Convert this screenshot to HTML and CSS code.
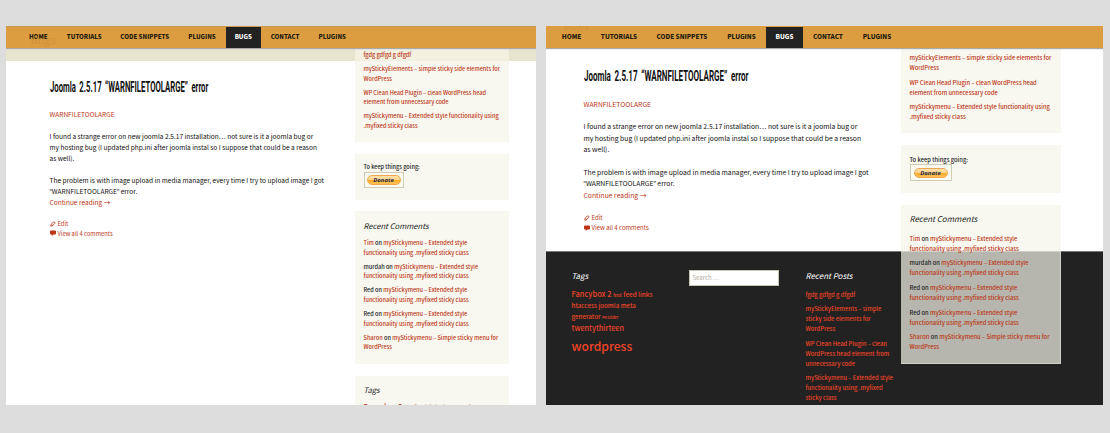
FILE: index.html
```
<!DOCTYPE html>
<html lang="en">
<head>
<meta charset="utf-8">
<title>Sticky menu</title>
<link rel="stylesheet" href="styles.css">
</head>
<body>
<svg class="defs" width="0" height="0">
  <symbol id="pencil" viewBox="0 0 12 12"><path d="M1.5 10.5l.8-4L7 1.7c1-1 3.800 1.500 2.800 2.700L5.400 9.400zM3 6.600l2.600 2.500" fill="none" stroke="currentColor" stroke-width="1.600"/></symbol>
  <symbol id="bubble" viewBox="0 0 12 12"><path d="M2 1h8q2 0 2 2v4q0 2-2 2H7l-3.500 3V9H2Q0 9 0 7V3q0-2 2-2z" fill="currentColor"/></symbol>
</svg>
<main class="stage">
  <section class="shot shot-a">
    <nav class="nav"><span class="ghost">Bugs</span>
      <a>HOME</a><a>TUTORIALS</a><a>CODE SNIPPETS</a><a>PLUGINS</a><a class="active">BUGS</a><a>CONTACT</a><a>PLUGINS</a>
    </nav>
    <div class="band"></div>
    <article class="post">
      <h1><span>Joomla 2.5.17 “WARNFILETOOLARGE” error</span></h1>
      <p class="cat">WARNFILETOOLARGE</p>
      <p>I found a strange error on new joomla 2.5.17 installation… not sure is it a joomla bug or<br>my hosting bug (I updated php.ini after joomla instal so I suppose that could be a reason<br>as well).</p>
      <p>The problem is with image upload in media manager, every time I try to upload image I got<br><span class="q">“</span>WARNFILETOOLARGE<span class="q">”</span> error.<br><a class="more">Continue reading →</a></p>
      <div class="meta"><a><svg><use href="#pencil"/></svg>Edit</a><a><svg><use href="#bubble"/></svg>View all 4 comments</a></div>
    </article>
    <aside class="side">
      <div class="box posts">
        <p><a>fgdg gdfgd g dfgdf</a></p>
        <p><a>myStickyElements – simple sticky side elements for<br>WordPress</a></p>
        <p><a>WP Clean Head Plugin – clean WordPress head<br>element from unnecessary code</a></p>
        <p><a>myStickymenu – Extended style functionality using<br>.myfixed sticky class</a></p>
      </div>
      <div class="box donate"><p>To keep things going:</p><div class="frame"><span class="pill">Donate</span></div></div>
      <div class="box comments">
        <h2>Recent Comments</h2>
        <p><a>Tim</a> on <a>myStickymenu – Extended style<br>functionality using .myfixed sticky class</a></p>
        <p>murdah on <a>myStickymenu – Extended style<br>functionality using .myfixed sticky class</a></p>
        <p>Red on <a>myStickymenu – Extended style<br>functionality using .myfixed sticky class</a></p>
        <p>Red on <a>myStickymenu – Extended style<br>functionality using .myfixed sticky class</a></p>
        <p><a>Sharon</a> on <a>myStickymenu – Simple sticky menu for<br>WordPress</a></p>
      </div>
      <div class="box tagbox"><h2>Tags</h2><p><a>Fancybox 2 <small>feed</small> <span>feed links htaccess joomla</span></a></p></div>
    </aside>
  </section>

  <section class="shot shot-b">
    <nav class="nav"><span class="ghost">Bugs</span>
      <a>HOME</a><a>TUTORIALS</a><a>CODE SNIPPETS</a><a>PLUGINS</a><a class="active">BUGS</a><a>CONTACT</a><a>PLUGINS</a>
    </nav>
    <article class="post">
      <h1><span>Joomla 2.5.17 “WARNFILETOOLARGE” error</span></h1>
      <p class="cat">WARNFILETOOLARGE</p>
      <p>I found a strange error on new joomla 2.5.17 installation… not sure is it a joomla bug or<br>my hosting bug (I updated php.ini after joomla instal so I suppose that could be a reason<br>as well).</p>
      <p>The problem is with image upload in media manager, every time I try to upload image I got<br><span class="q">“</span>WARNFILETOOLARGE<span class="q">”</span> error.<br><a class="more">Continue reading →</a></p>
      <div class="meta"><a><svg><use href="#pencil"/></svg>Edit</a><a><svg><use href="#bubble"/></svg>View all 4 comments</a></div>
    </article>
    <footer class="footer">
      <div class="tags"><h2>Tags</h2>
        <p class="t1">Fancybox 2 <small>feed</small> <span>feed links</span></p>
        <p class="t2">htaccess joomla meta</p>
        <p class="t3">generator <small>PKSlider</small></p>
        <p class="t4">twentythirteen</p>
        <p class="t5">wordpress</p>
      </div>
      <div class="search">Search …</div>
      <div class="recent"><h2>Recent Posts</h2>
        <p>fgdg gdfgd g dfgdf</p>
        <p>myStickyElements – simple<br>sticky side elements for<br>WordPress</p>
        <p>WP Clean Head Plugin – clean<br>WordPress head element from<br>unnecessary code</p>
        <p>myStickymenu – Extended style<br>functionality using .myfixed<br>sticky class</p>
      </div>
    </footer>
    <aside class="side">
      <div class="box posts">
        <p><a>myStickyElements – simple sticky side elements for<br>WordPress</a></p>
        <p><a>WP Clean Head Plugin – clean WordPress head<br>element from unnecessary code</a></p>
        <p><a>myStickymenu – Extended style functionality using<br>.myfixed sticky class</a></p>
      </div>
      <div class="box donate"><p>To keep things going:</p><div class="frame"><span class="pill">Donate</span></div></div>
      <div class="box comments">
        <h2>Recent Comments</h2>
        <p><a>Tim</a> on <a>myStickymenu – Extended style<br>functionality using .myfixed sticky class</a></p>
        <p>murdah on <a>myStickymenu – Extended style<br>functionality using .myfixed sticky class</a></p>
        <p>Red on <a>myStickymenu – Extended style<br>functionality using .myfixed sticky class</a></p>
        <p>Red on <a>myStickymenu – Extended style<br>functionality using .myfixed sticky class</a></p>
        <p><a>Sharon</a> on <a>myStickymenu – Simple sticky menu for<br>WordPress</a></p>
      </div>
    </aside>
  </section>
</main>
</body>
</html>
```

FILE: styles.css
```
* { box-sizing: border-box; }
body { margin: 0; background: #ddd; font-family: "Noto Sans CJK SC", "Noto Sans", sans-serif; font-weight: 500; color: #222; overflow: hidden; }
h1, h2, p { margin: 0; }
p, a, h1, h2 { white-space: nowrap; }
a { color: #bd3415; }
.q { font-family: "Open Sans", sans-serif; }
.defs { position: absolute; }
.stage { height: 433px; padding: 26px 7px 28px 6px; display: grid; grid-template-columns: 530px 557px; gap: 10px; }
.shot { position: relative; height: 379px; background: #fff; overflow: hidden; display: flex; flex-direction: column; }
.shot-a { --s: 1; }
.shot-b { --s: 1.041; }

/* Navigation */
.nav { position: relative; z-index: 2; flex: none; height: 22px; display: grid; background: #dc9d40; border-top: 1px solid #c99b52; box-shadow: 0 1px 1px #aaa; }
.shot-a .nav { grid-template-columns: 37.500px 54.500px 66.500px 48px 34.500px 49px 45.500px; padding-left: 13.500px; }
.shot-b .nav { grid-template-columns: 39px 56px 70px 49px 37px 50px 48px; padding-left: 6px; border-top-color: #dc9d40; }
.nav a { color: #221a0c; font-size: calc(6.100px * var(--s)); font-weight: 900; line-height: 20px; text-align: center; }
.nav .active { background: #222; color: #fff; }
.ghost { position: absolute; left: 24px; top: 5px; font-size: 11px; font-weight: 400; line-height: 14px; font-style: italic; color: #c98d38; opacity: .6; }
.shot-b .ghost { left: 17px; top: -9px; clip-path: inset(8px 0 0); }
.band { flex: none; height: 13px; background: #e7e5ce; }

/* Article */
.post { --l: 11px; flex: none; padding: 18px 0 0 43.500px; font-size: calc(6.550px * var(--s)); font-weight: 400; line-height: var(--l); color: #111; }
.shot-b .post { --l: 11.400px; padding: 20px 0 0 37.500px; height: 203px; }
.post h1 { height: 16px; font: 700 15px/16px "Roboto", sans-serif; color: #111; }
.post h1 span { display: inline-block; transform-origin: 0 50%; transform: scaleX(.515); word-spacing: 3px; }
.shot-b h1 span { transform: scaleX(.535); }
.post p { margin-bottom: var(--l); }
.post .cat { margin-top: 14px; color: #bd3415; }
.shot-b .post .cat { margin-top: 14.500px; }
.meta { display: flex; flex-direction: column; font-size: calc(5.800px * var(--s)); line-height: calc(9.600px * var(--s)); }
.meta a { display: flex; align-items: center; }
.meta svg { width: 6px; height: 6px; margin: 0 1.500px 0 .5px; }

/* Sidebar floats above the page and its footer */
.side { position: absolute; left: 349px; top: 22px; width: 154px; font-size: calc(5.580px * var(--s)); line-height: calc(9.600px * var(--s)); display: flex; flex-direction: column; gap: 11.500px; }
.shot-b .side { left: 355px; width: 160px; gap: 12px; }
.box { background: rgba(245, 245, 234, .7); padding: 0 8.500px; }
.box p { margin-bottom: calc(4.500px * var(--s)); }
.box h2, .footer h2 { font-size: calc(7.650px * var(--s)); font-weight: 400; font-style: italic; line-height: 14px; }
.posts { height: 94px; padding-top: 3px; }
.shot-b .posts { height: 85px; padding-top: 5px; }
.donate { height: 46px; padding-top: 9.500px; }
.shot-b .donate { height: 48px; padding-top: 10px; }
.donate p { margin: 0 0 -1px; }
.frame { width: 40px; height: 16px; border: 1px solid #cfcdb5; background: #fbfaf0; display: grid; place-items: center; }
.shot-b .frame { width: 42px; height: 17px; }
.pill { width: 34px; height: 10px; border-radius: 5px; border: 1px solid #f0a850; background: linear-gradient(#ffe2b0, #ffd48a 45%, #fbaa26 55%, #ffc45c); font: italic 700 6px/8px "Open Sans", sans-serif; color: #1c2f55; text-align: center; }
.comments { position: relative; height: 153px; padding-top: 8px; }
.comments h2 { margin-bottom: 6px; }
.shot-b .comments { height: 159px; padding-top: 7px; }
.shot-b .comments h2 { margin-bottom: 7.500px; }
.shot-b .comments::after { content: ""; position: absolute; inset: 46px 0 0; border: 1px solid #cdd0c6; border-width: 0 1px 1px 0; }
.tagbox { height: 60px; padding-top: 7px; }
.tagbox p { margin-top: 6px; font-size: 7.300px; }
.tagbox small { font-size: 4px; }
.tagbox span { font-size: 6px; }

/* Footer */
.footer { flex: 1; padding: 16.500px 0 0 25.500px; background: #222; display: grid; grid-template-columns: 117px 117px 100px; color: #f04428; border-top: 1px solid #777; }
.footer h2 { color: #fff; }
.search { width: 90px; height: 16px; margin-top: 1px; padding-left: 3px; background: #fff; border: 1px solid #c9c5b5; font-size: 6px; font-weight: 400; line-height: 14px; color: #b0ada0; }
.tags p { height: 11px; line-height: 11px; font-size: 6.250px; }
.tags .t1 { margin-top: 5px; height: 12px; font-size: 7.500px; }
.tags .t1 span { font-size: 6.400px; }
.tags small { font-size: 4px; }
.tags .t4 { height: 14px; line-height: 13px; font-size: 7.300px; }
.tags .t5 { height: 20px; line-height: 19px; font-size: 12.100px; }
.recent { font-size: 5.820px; line-height: 10px; }
.recent h2 { margin-bottom: 7px; }
.recent p { margin-bottom: 4.500px; }
```
